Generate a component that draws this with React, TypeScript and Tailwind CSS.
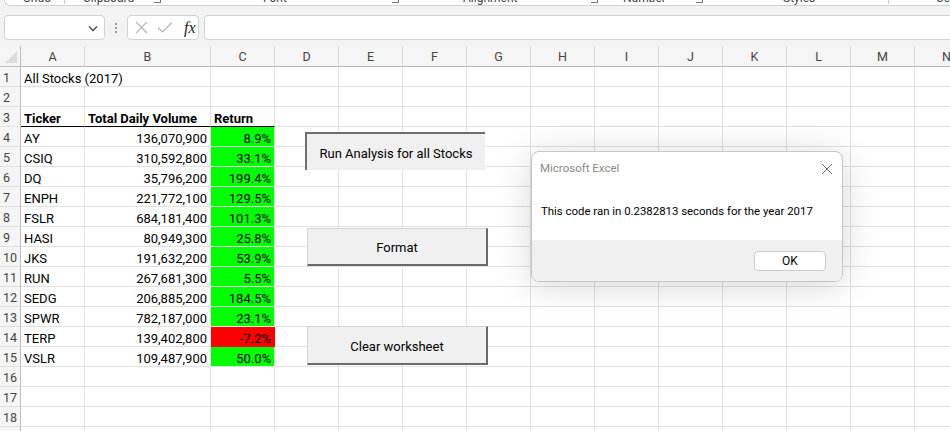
import React from 'react';

const COLS = ['A', 'B', 'C', 'D', 'E', 'F', 'G', 'H', 'I', 'J', 'K', 'L', 'M', 'N'];

type Row = { a?: string; b?: string; c?: string; fill?: 'g' | 'r'; header?: boolean };

const DATA: Record<number, Row> = {
  3: { a: 'Ticker', b: 'Total Daily Volume', c: 'Return', header: true },
  4: { a: 'AY', b: '136,070,900', c: '8.9%', fill: 'g' },
  5: { a: 'CSIQ', b: '310,592,800', c: '33.1%', fill: 'g' },
  6: { a: 'DQ', b: '35,796,200', c: '199.4%', fill: 'g' },
  7: { a: 'ENPH', b: '221,772,100', c: '129.5%', fill: 'g' },
  8: { a: 'FSLR', b: '684,181,400', c: '101.3%', fill: 'g' },
  9: { a: 'HASI', b: '80,949,300', c: '25.8%', fill: 'g' },
  10: { a: 'JKS', b: '191,632,200', c: '53.9%', fill: 'g' },
  11: { a: 'RUN', b: '267,681,300', c: '5.5%', fill: 'g' },
  12: { a: 'SEDG', b: '206,885,200', c: '184.5%', fill: 'g' },
  13: { a: 'SPWR', b: '782,187,000', c: '23.1%', fill: 'g' },
  14: { a: 'TERP', b: '139,402,800', c: '-7.2%', fill: 'r' },
  15: { a: 'VSLR', b: '109,487,900', c: '50.0%', fill: 'g' },
};

const ROWS = Array.from({ length: 19 }, (_, i) => i + 1);

const cellBase =
  'h-[20px] border-r border-b border-[#e1e1e1] px-[3px] leading-[23px] whitespace-nowrap text-[13px] text-black';

function RibbonStrip() {
  return (
    <div className="h-[6px] bg-[#f3f3f3] pl-[4px]">
      <div className="relative h-[6px] bg-white rounded-bl-[6px] border-b border-l border-[#d2d2d2] overflow-hidden text-[12px] leading-[12px] text-[#444]">
        <span className="absolute left-[18px] top-[-8px]">Undo</span>
        <span className="absolute left-[59px] top-0 h-[4px] w-px bg-[#c8c8c8]" />
        <span className="absolute left-[78px] top-[-8px]">Clipboard</span>
        <span className="absolute left-[149px] top-0 h-[3px] w-[7px] border-b border-r border-[#777]" />
        <span className="absolute left-[258px] top-[-8px]">Font</span>
        <span className="absolute left-[387px] top-0 h-[3px] w-[7px] border-b border-r border-[#777]" />
        <span className="absolute left-[458px] top-[-8px]">Alignment</span>
        <span className="absolute left-[586px] top-0 h-[3px] w-[7px] border-b border-r border-[#777]" />
        <span className="absolute left-[618px] top-[-8px]">Number</span>
        <span className="absolute left-[691px] top-0 h-[3px] w-[7px] border-b border-r border-[#777]" />
        <span className="absolute left-[778px] top-[-8px]">Styles</span>
        <span className="absolute left-[883px] top-0 h-[4px] w-px bg-[#c8c8c8]" />
        <span className="absolute left-[931px] top-[-8px]">Cells</span>
      </div>
    </div>
  );
}

function FormulaBar() {
  return (
    <div className="h-[40px] bg-[#f3f3f3] flex items-start pt-[9px] pl-[4px] gap-0">
      <div className="w-[101px] h-[25px] shrink-0 bg-white border border-[#d2d2d2] rounded-[4px] flex items-center justify-end pr-[5px]">
        <svg width="12" height="12" viewBox="0 0 12 12">
          <path d="M2 4.5 L6 8.5 L10 4.5" fill="none" stroke="#444" strokeWidth="1.3" />
        </svg>
      </div>
      <div className="w-[22px] h-[25px] shrink-0 flex flex-col items-center justify-center gap-[2px]">
        <span className="w-[2px] h-[2px] bg-[#9a9a9a]" />
        <span className="w-[2px] h-[2px] bg-[#9a9a9a]" />
        <span className="w-[2px] h-[2px] bg-[#9a9a9a]" />
      </div>
      <div className="w-[72px] h-[25px] shrink-0 bg-white border border-[#d2d2d2] rounded-[4px] flex items-center pl-[7px]">
        <svg width="13" height="13" viewBox="0 0 13 13">
          <path d="M1 1 L12 12 M12 1 L1 12" stroke="#b4b4b4" strokeWidth="1.1" fill="none" />
        </svg>
        <svg width="16" height="13" viewBox="0 0 16 13" className="ml-[9px]">
          <path d="M1 6.5 L5.5 11 L15 1.5" stroke="#b4b4b4" strokeWidth="1.1" fill="none" />
        </svg>
        <span className="ml-[11px] font-['Liberation_Serif',serif] italic text-[16px] leading-[16px] text-[#222]">fx</span>
      </div>
      <div className="ml-[5px] w-[760px] h-[25px] shrink-0 bg-white border border-[#d2d2d2] rounded-[4px]" />
    </div>
  );
}

function Cell({ row, col }: { row: number; col: number }) {
  const d = DATA[row];
  if (col === 0) {
    if (row === 1) {
      return <div className={`${cellBase} col-span-2`}>All Stocks (2017)</div>;
    }
    return (
      <div className={`${cellBase} ${d?.header ? 'font-bold border-b-black' : ''}`}>{d?.a}</div>
    );
  }
  if (col === 1) {
    if (row === 1) return null;
    return (
      <div className={`${cellBase} ${d?.header ? 'font-bold border-b-black text-left' : 'text-right'}`}>{d?.b}</div>
    );
  }
  if (col === 2) {
    let cls = '';
    if (d?.header) cls = 'font-bold border-b-black text-left';
    else if (d?.fill === 'g') cls = 'text-right bg-[#00ff00] border-[#00ff00]';
    else if (d?.fill === 'r') cls = 'text-right bg-[#ff0000] border-[#ff0000]';
    return <div className={`${cellBase} ${cls}`}>{d?.c}</div>;
  }
  return <div className={cellBase} />;
}

function Sheet() {
  return (
    <div className="relative flex-1 overflow-hidden">
      <div className="grid grid-cols-[21px_64px_126px_64px_64px_64px_64px_64px_64px_64px_64px_64px_64px_64px_64px] w-[1000px]">
        <div className="h-[21px] bg-[#f5f5f5] border-r border-b border-[#bdbdbd] relative">
          <svg width="21" height="21" viewBox="0 0 21 21" className="absolute left-0 top-0">
            <polygon points="17,5 17,17 5,17" fill="#dcdcdc" />
          </svg>
        </div>
        {COLS.map((c) => (
          <div
            key={c}
            className="h-[21px] bg-[#f5f5f5] border-r border-r-[#dadada] border-b border-b-[#b9b9b9] text-center leading-[22px] text-[12.5px] text-[#444]"
          >
            {c}
          </div>
        ))}
        {ROWS.map((r) => (
          <React.Fragment key={r}>
            <div className="h-[20px] bg-[#f5f5f5] border-r border-r-[#bdbdbd] border-b border-b-[#e1e1e1] pl-[3px] leading-[22px] text-[12.5px] text-[#444]">
              {r}
            </div>
            {COLS.map((_, ci) => (
              <Cell key={ci} row={r} col={ci} />
            ))}
          </React.Fragment>
        ))}
      </div>

      {/* Macro buttons */}
      <div className="absolute left-[305px] top-[86px] w-[180px] h-[38px] bg-[#f0f0f0] border-t-2 border-l-2 border-[#6f6f6f] flex items-center justify-center pt-[3px] text-[13px] text-black">
        Run Analysis for all Stocks
      </div>
      <div className="absolute left-[307px] top-[182px] w-[181px] h-[38px] bg-[#f0f0f0] border border-t-[#d4d4d4] border-l-[#d4d4d4] border-r-2 border-b-2 border-r-[#6a6a6a] border-b-[#6a6a6a] flex items-center justify-center pt-[3px] text-[13px] text-black">
        Format
      </div>
      <div className="absolute left-[307px] top-[280px] w-[181px] h-[39px] bg-[#f0f0f0] border border-t-[#d4d4d4] border-l-[#d4d4d4] border-r-2 border-b-2 border-r-[#6a6a6a] border-b-[#6a6a6a] flex items-center justify-center pt-[3px] text-[13px] text-black">
        Clear worksheet
      </div>

      {/* Message box */}
      <div className="absolute left-[531px] top-[105px] w-[312px] h-[131px] bg-white rounded-[8px] border border-[#c6c6c6] shadow-[0_4px_36px_rgba(0,0,0,0.16)] overflow-hidden flex flex-col">
        <div className="h-[30px] flex items-center justify-between pl-[8px] pr-[9px] pt-[3px]">
          <span className="text-[11.5px] text-[#8a8a8a]">Microsoft Excel</span>
          <svg width="12" height="12" viewBox="0 0 12 12">
            <path d="M1 1 L11 11 M11 1 L1 11" stroke="#666" strokeWidth="1" fill="none" />
          </svg>
        </div>
        <div className="h-[58px] flex items-center pl-[9px] pt-[2px] text-[11.4px] text-black">
          This code ran in 0.2382813 seconds for the year 2017
        </div>
        <div className="flex-1 bg-[#f0f0f0] flex justify-end items-start pt-[11px] pr-[16px]">
          <div className="w-[72px] h-[20px] bg-white border border-[#cccccc] rounded-[4px] flex items-center justify-center text-[12px] text-black">
            OK
          </div>
        </div>
      </div>
    </div>
  );
}

export default function App() {
  return (
    <div className="w-[950px] h-[431px] overflow-hidden bg-white flex flex-col font-['Roboto',sans-serif]">
      <RibbonStrip />
      <FormulaBar />
      <Sheet />
    </div>
  );
}
